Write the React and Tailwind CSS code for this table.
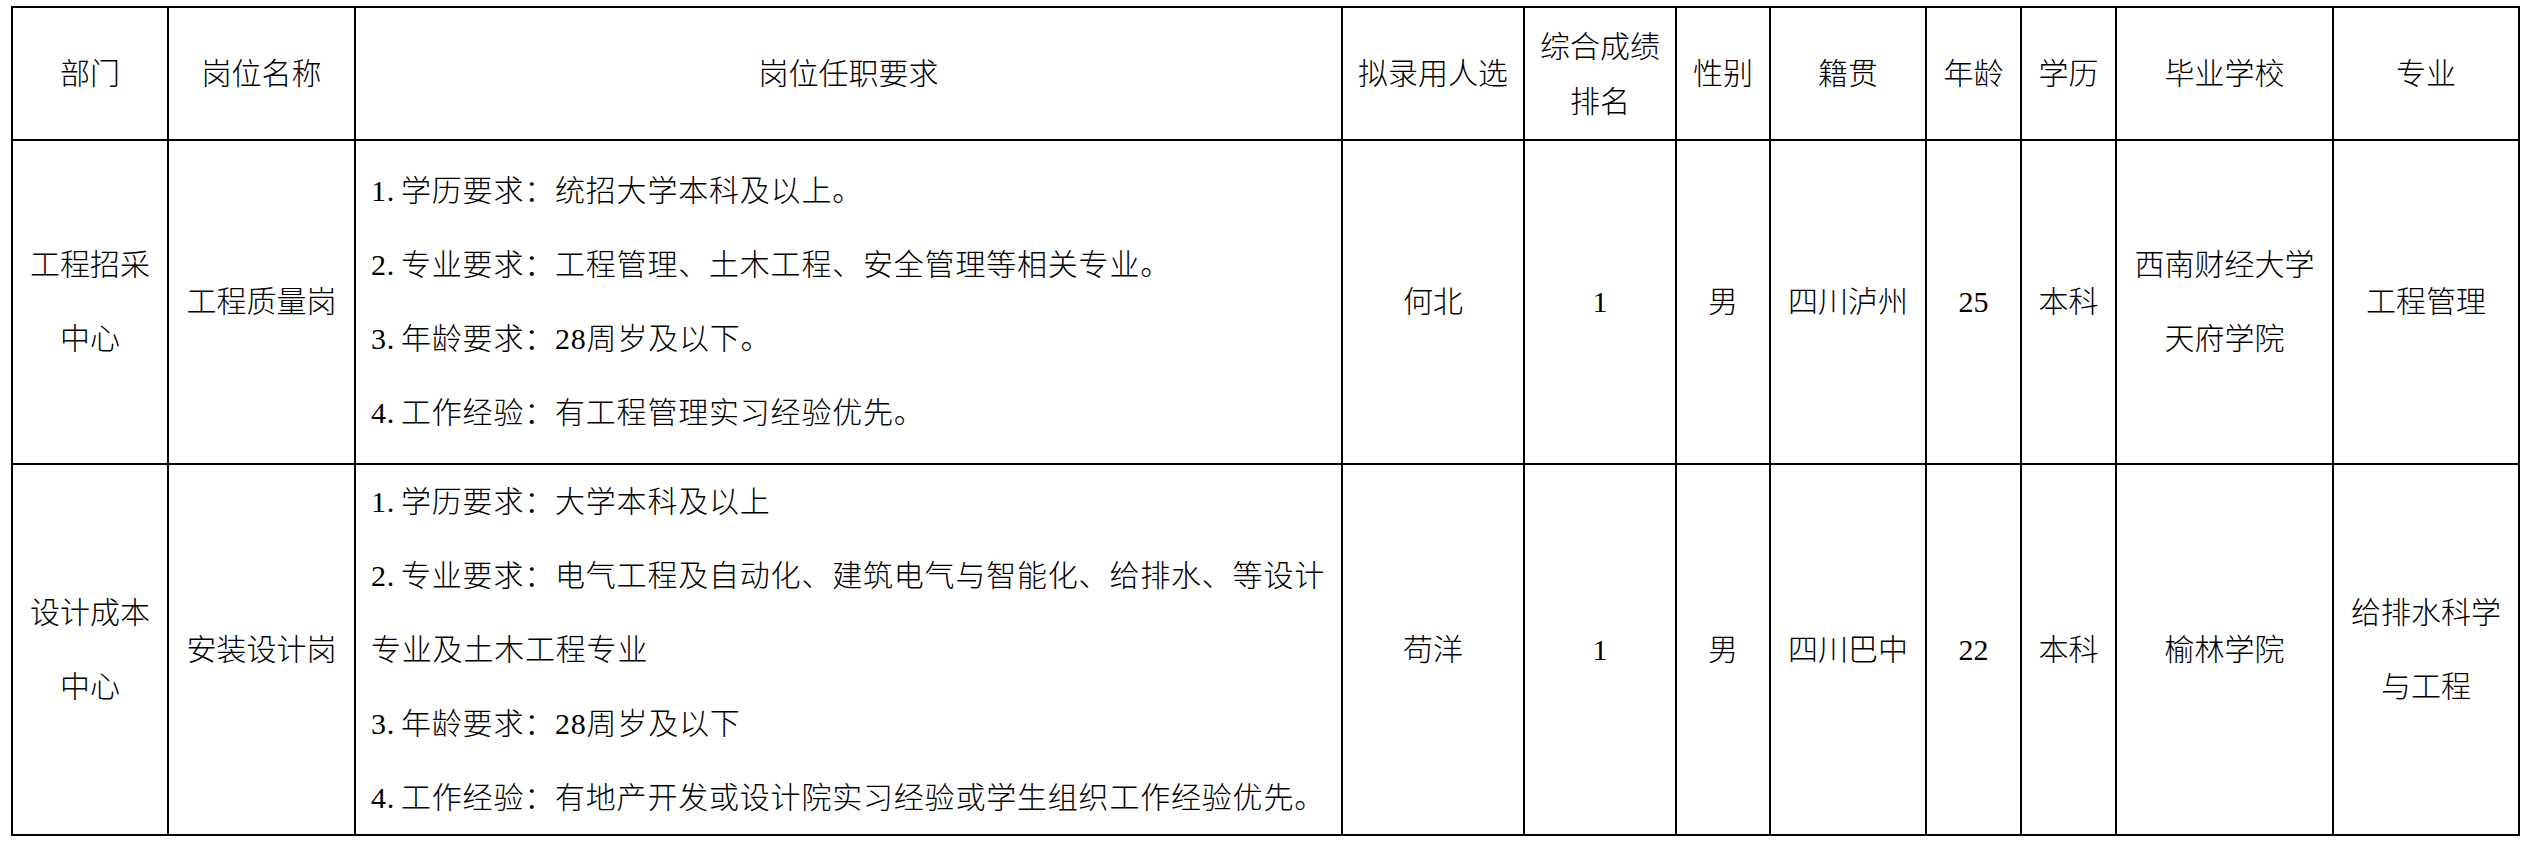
import React from "react";

const headers = [
  ["部门"],
  ["岗位名称"],
  ["岗位任职要求"],
  ["拟录用人选"],
  ["综合成绩", "排名"],
  ["性别"],
  ["籍贯"],
  ["年龄"],
  ["学历"],
  ["毕业学校"],
  ["专业"],
];

const rows = [
  {
    dept: ["工程招采", "中心"],
    post: "工程质量岗",
    reqs: [
      ["1.", "学历要求：统招大学本科及以上。"],
      ["2.", "专业要求：工程管理、土木工程、安全管理等相关专业。"],
      ["3.", "年龄要求：28周岁及以下。"],
      ["4.", "工作经验：有工程管理实习经验优先。"],
    ],
    name: "何北",
    rank: "1",
    sex: "男",
    home: "四川泸州",
    age: "25",
    edu: "本科",
    school: ["西南财经大学", "天府学院"],
    major: ["工程管理"],
  },
  {
    dept: ["设计成本", "中心"],
    post: "安装设计岗",
    reqs: [
      ["1.", "学历要求：大学本科及以上"],
      ["2.", "专业要求：电气工程及自动化、建筑电气与智能化、给排水、等设计"],
      ["", "专业及土木工程专业"],
      ["3.", "年龄要求：28周岁及以下"],
      ["4.", "工作经验：有地产开发或设计院实习经验或学生组织工作经验优先。"],
    ],
    name: "苟洋",
    rank: "1",
    sex: "男",
    home: "四川巴中",
    age: "22",
    edu: "本科",
    school: ["榆林学院"],
    major: ["给排水科学", "与工程"],
  },
];

const Cell = ({ lines, lh = "leading-[74px]" }) => (
  <div className={`flex flex-col items-center justify-center border-r-2 border-b-2 border-black text-center ${lh}`}>
    {lines.map((t, i) => (
      <div key={i} className="whitespace-nowrap">{t}</div>
    ))}
  </div>
);

export default function App() {
  return (
    <div className="min-h-[844px] w-[2529px] bg-white pl-[11px] pt-[6px] text-[30px] font-light text-black font-['Liberation_Serif','Noto_Sans_CJK_SC',serif]">
      <div className="grid w-[2509px] grid-cols-[156px_187px_987px_182px_152px_94px_156px_95px_95px_217px_186px] grid-rows-[133px_324px_371px] border-t-2 border-l-2 border-black">
        {headers.map((h, i) => (
          <Cell key={i} lines={h} lh="leading-[55px]" />
        ))}
        {rows.map((r, i) => (
          <React.Fragment key={i}>
            <Cell lines={r.dept} />
            <Cell lines={[r.post]} />
            <div className="flex flex-col justify-center border-r-2 border-b-2 border-black pl-[15px] leading-[74px] tracking-[0.8px]">
              {r.reqs.map(([n, t], j) => (
                <div key={j} className="whitespace-nowrap">
                  {n && <span className="inline-block w-[30px]">{n}</span>}
                  {t}
                </div>
              ))}
            </div>
            <Cell lines={[r.name]} />
            <Cell lines={[r.rank]} />
            <Cell lines={[r.sex]} />
            <Cell lines={[r.home]} />
            <Cell lines={[r.age]} />
            <Cell lines={[r.edu]} />
            <Cell lines={r.school} />
            <Cell lines={r.major} />
          </React.Fragment>
        ))}
      </div>
    </div>
  );
}
